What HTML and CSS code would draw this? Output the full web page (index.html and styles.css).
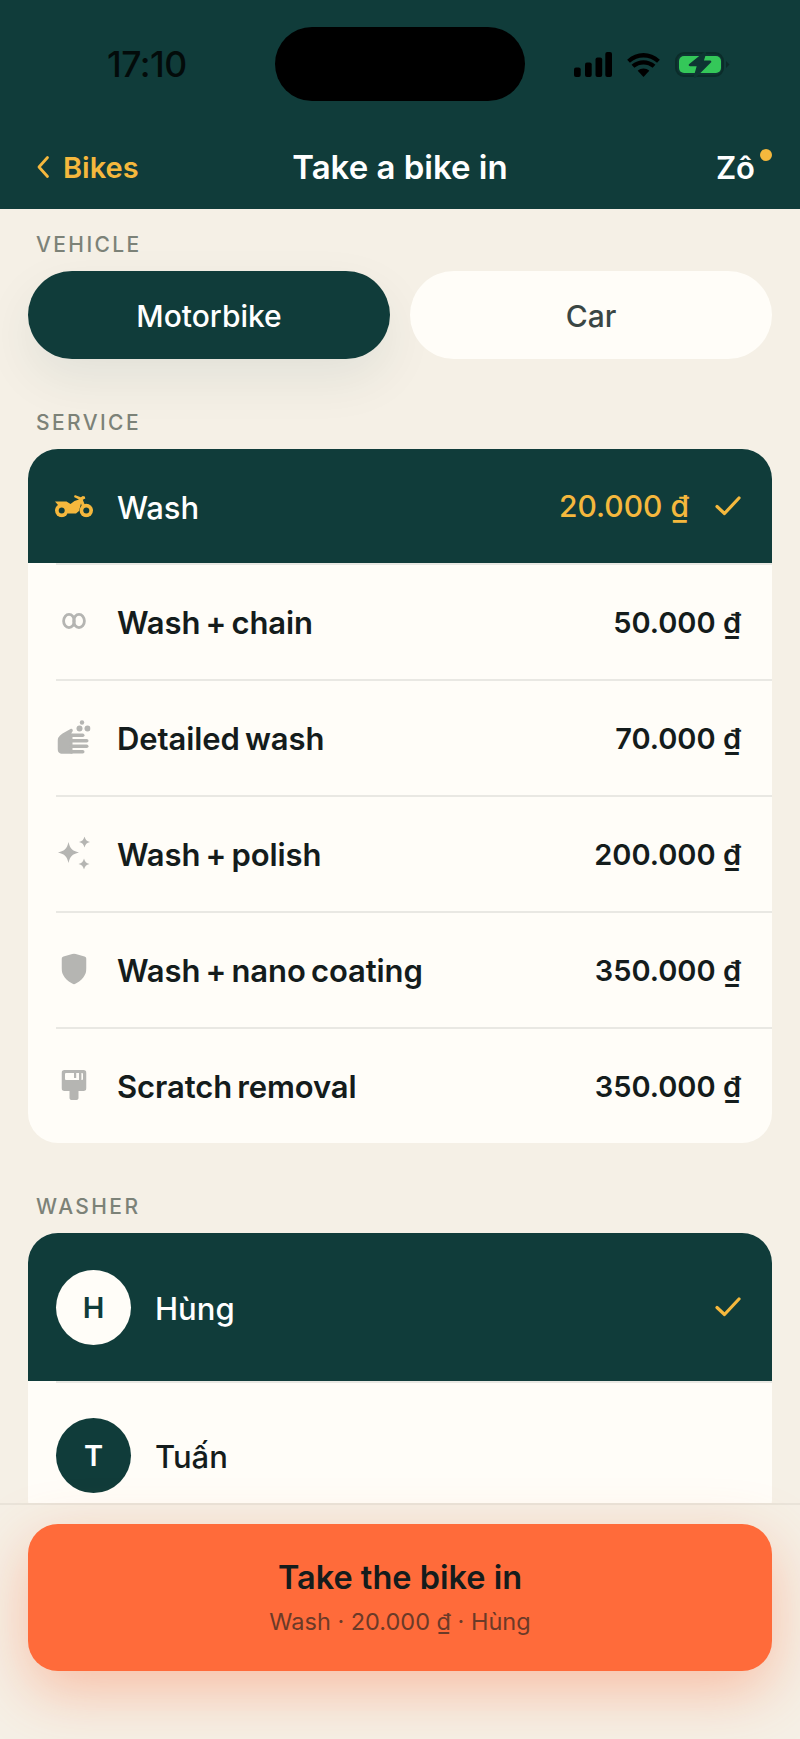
FILE: index.html
```html
<!DOCTYPE html>
<html lang="en">
<head>
<meta charset="utf-8">
<title>Take a bike in</title>
<link rel="stylesheet" href="styles.css">
</head>
<body>
<div class="phone">
  <header class="top">
    <div class="status">
      <span class="time">17:10</span>
      <div class="island"></div>
      <div class="sys">
        <svg class="signal" width="38" height="25" viewBox="0 0 38 25"><rect x="0" y="15.500" width="6.700" height="9.500" rx="2"/><rect x="11" y="10.500" width="6.700" height="14.500" rx="2"/><rect x="21.500" y="5.500" width="6.700" height="19.500" rx="2"/><rect x="31.300" y="0" width="6.700" height="25" rx="2"/></svg>
        <svg class="wifi" width="33" height="25" viewBox="0 0 34 26"><path d="M17 26l-6-6.500c3.400-3 8.600-3 12 0z"/><path d="M7.500 16.500L4.600 13.200c7-6.300 17.800-6.300 24.800 0l-2.900 3.300c-5.400-4.700-13.600-4.700-19 0z"/><path d="M2.900 11.300L0 8C9.700-1.300 24.300-1.300 34 8l-2.900 3.300C23 3.900 11 3.900 2.900 11.300z"/></svg>
        <svg class="battery" width="55" height="26" viewBox="0 0 55 26"><rect x="1" y="1" width="47" height="23" rx="8" fill="#0e3533" stroke="#0b2c2a" stroke-width="2"/><rect x="4" y="4" width="42" height="17" rx="5" fill="#34c759"/><path d="M51 9l3.500 3.500L51 16z" fill="#0b2b29"/><path d="M30 1L15 13h8.300L20 24.700 35 9.700h-7.700z" fill="#0e3533" stroke="#0e3533" stroke-width="2.500" stroke-linejoin="round"/></svg>
      </div>
    </div>
    <nav class="nav">
      <a class="back"><svg width="14" height="24" viewBox="0 0 14 24"><path d="M11.500 2.500L3 12l8.500 9.500" fill="none" stroke="#f5b83d" stroke-width="2.800" stroke-linecap="round" stroke-linejoin="round"/></svg><span>Bikes</span></a>
      <h1 class="title">Take a bike in</h1>
      <div class="user">Zô<i class="dot"></i></div>
    </nav>
  </header>

  <main class="content">
    <div class="label first">VEHICLE</div>
    <div class="pills">
      <div class="pill on">Motorbike</div>
      <div class="pill">Car</div>
    </div>

    <div class="label svc">SERVICE</div>
    <div class="card">
      <div class="row sel">
        <svg class="ico" width="38" height="23" viewBox="0 0 38 23"><g fill="#f5b83d"><path d="M0 7h11.500l4 2.500 4-3 4.500-1.500-5-2.500.8-2 6 2.300 2-1.300 2 .5.500 2-2.500 1.200L32 16l-3.500 1L26 9l-2 7.500-3 2.500h-8l-1-6-5-2.500H3z"/><circle cx="6.700" cy="16" r="6.700"/><circle cx="31.300" cy="16" r="6.700"/></g><circle cx="6.700" cy="16" r="3" fill="#103c3a"/><circle cx="31.300" cy="16" r="3" fill="#103c3a"/></svg>
        <span class="name">Wash</span><span class="price">20.000 ₫</span>
        <svg class="chk" width="26" height="20" viewBox="0 0 26 20"><path d="M2 10.500l7.500 7L24 2" fill="none" stroke="#f5b83d" stroke-width="3.200" stroke-linecap="round" stroke-linejoin="round"/></svg>
      </div>
      <div class="row">
        <svg class="ico" width="24" height="17" viewBox="0 0 24 17"><ellipse cx="7" cy="8.500" rx="5.400" ry="6.700" fill="none" stroke="#b5b5b2" stroke-width="2.800"/><ellipse cx="17" cy="8.500" rx="5.400" ry="6.700" fill="none" stroke="#b5b5b2" stroke-width="2.800"/></svg>
        <span class="name">Wash + chain</span><span class="price">50.000 ₫</span>
      </div>
      <div class="row">
        <svg class="ico" width="33" height="34" viewBox="0 0 33 34"><g fill="#b5b5b2"><circle cx="24.500" cy="2.500" r="2.200"/><circle cx="22" cy="8.500" r="3"/><circle cx="30" cy="8.500" r="3"/><path d="M0 21c0-3.500 2.500-5.500 5-7.500l8-4.500c1.600-.8 3 1 2 2.500l-1.500 2.200h1.500v20H5c-3 0-5-2-5-5z"/><rect x="12" y="13.500" width="15" height="3.600" rx="1.800"/><rect x="12" y="19" width="19" height="3.600" rx="1.800"/><rect x="12" y="24.500" width="19" height="3.600" rx="1.800"/><rect x="12" y="30" width="15" height="3.600" rx="1.800"/></g></svg>
        <span class="name">Detailed wash</span><span class="price">70.000 ₫</span>
      </div>
      <div class="row">
        <svg class="ico" width="32" height="33" viewBox="0 0 32 33"><g fill="#b5b5b2"><path d="M10.500 5.500c1.600 6.500 3.500 8.800 10.500 10.500-7 1.700-8.900 4-10.500 10.500C8.900 20 7 17.700 0 16c7-1.700 8.900-4 10.500-10.500z"/><path d="M26.500 0c.8 3.200 2.200 4.700 5.500 5.500-3.300.8-4.700 2.300-5.500 5.500-.8-3.200-2.200-4.700-5.500-5.500 3.300-.8 4.700-2.300 5.500-5.500z"/><path d="M26 22c.8 3.200 2.200 4.700 5.500 5.500-3.300.8-4.700 2.300-5.500 5.500-.8-3.200-2.200-4.700-5.500-5.500 3.300-.8 4.700-2.300 5.500-5.500z"/></g></svg>
        <span class="name">Wash + polish</span><span class="price">200.000 ₫</span>
      </div>
      <div class="row">
        <svg class="ico" width="25" height="31" viewBox="0 0 25 31"><path d="M12.500 0l10.500 3c1.300.4 2 1.300 2 2.500v9c0 7.500-5 12.800-12.500 16.500C5 27.300 0 22 0 14.500v-9C0 4.300.7 3.400 2 3z" fill="#b5b5b2"/></svg>
        <span class="name">Wash + nano coating</span><span class="price">350.000 ₫</span>
      </div>
      <div class="row">
        <svg class="ico" width="25" height="30" viewBox="0 0 25 30"><path d="M3 0h19c1.700 0 3 1.300 3 3v15c0 1.700-1.300 3-3 3h-5v7c0 1.100-.9 2-2 2h-5c-1.100 0-2-.9-2-2v-7H3c-1.700 0-3-1.300-3-3V3C0 1.300 1.300 0 3 0z" fill="#b5b5b2"/><rect x="3.500" y="3" width="18" height="7" rx="1" fill="#fffdf8"/><rect x="12.500" y="3" width="2.200" height="5" fill="#b5b5b2"/><rect x="17.500" y="3" width="2.400" height="7" fill="#b5b5b2"/></svg>
        <span class="name">Scratch removal</span><span class="price">350.000 ₫</span>
      </div>
    </div>

    <div class="label wsh">WASHER</div>
    <div class="card">
      <div class="wrow sel">
        <span class="avatar inv">H</span><span class="wname">Hùng</span>
        <svg class="chk" width="26" height="20" viewBox="0 0 26 20"><path d="M2 10.500l7.500 7L24 2" fill="none" stroke="#f5b83d" stroke-width="3.200" stroke-linecap="round" stroke-linejoin="round"/></svg>
      </div>
      <div class="wrow">
        <span class="avatar">T</span><span class="wname">Tuấn</span>
      </div>
    </div>
  </main>

  <footer class="foot">
    <button class="cta">
      <span class="cta-t">Take the bike in</span>
      <span class="cta-s">Wash · 20.000 ₫ · Hùng</span>
    </button>
  </footer>
</div>
</body>
</html>
```
FILE: styles.css
```css
* { box-sizing: border-box; }
html, body { margin: 0; padding: 0; }
body {
  width: 800px;
  height: 1739px;
  overflow: hidden;
  background: #f5f0e6;
  font-family: "Inter", "Noto Sans", sans-serif;
  color: #141c1c;
}
.phone { position: relative; width: 800px; height: 1739px; overflow: hidden; }

.top { background: #103c3a; height: 209px; }
.status {
  position: relative;
  height: 135px;
  display: flex;
  justify-content: space-between;
  align-items: flex-start;
}
.time {
  margin: 45px 0 0 107px;
  font-size: 35.5px;
  font-weight: 500;
  line-height: 40px;
  color: #030b0a;
  letter-spacing: -.5px;
}
.island {
  position: absolute;
  left: 275px;
  top: 27px;
  width: 250px;
  height: 74px;
  border-radius: 37px;
  background: #000;
}
.sys { display: flex; align-items: flex-start; gap: 15px; margin: 52px 70px 0 0; }
.signal, .wifi { fill: #000; display: block; }
.battery { display: block; }

.nav {
  display: flex;
  align-items: center;
  justify-content: space-between;
  height: 64px;
  padding: 0 36px;
  position: relative;
}
.back { display: flex; align-items: center; gap: 13px; color: #f5b83d; font-size: 29px; font-weight: 600; }
.title {
  position: absolute;
  left: 0;
  right: 0;
  margin: 0;
  text-align: center;
  color: #fff;
  font-size: 33px;
  font-weight: 600;
}
.user { position: relative; color: #fff; font-size: 31px; font-weight: 600; margin-right: 9px; }
.dot {
  position: absolute;
  right: -17px;
  top: 0;
  width: 12px;
  height: 12px;
  border-radius: 50%;
  background: #f5b83d;
}

.content { padding: 0 28px; }
.label {
  font-size: 21px;
  line-height: 26px;
  font-weight: 500;
  letter-spacing: 2.4px;
  color: #7c8278;
  padding-left: 8px;
}
.label.first { margin-top: 23px; margin-bottom: 13px; }
.label.svc { margin-top: 51px; margin-bottom: 13px; }
.label.wsh { margin-top: 51px; margin-bottom: 13px; }

.pills { display: flex; gap: 20px; }
.pill {
  flex: 1;
  height: 88px;
  padding-top: 2px;
  border-radius: 44px;
  background: #fffdf8;
  color: #3a4644;
  display: flex;
  align-items: center;
  justify-content: center;
  font-size: 30px;
  font-weight: 500;
}
.pill.on { background: #103c3a; color: #fff; box-shadow: 0 20px 50px rgba(16,60,58,.08); }

.card { background: #fffdf8; border-radius: 30px; overflow: hidden; }
.row {
  position: relative;
  height: 116px;
  display: flex;
  align-items: center;
  padding-right: 31px;
}
.row + .row::before, .wrow + .wrow::before {
  content: "";
  position: absolute;
  top: 0;
  left: 28px;
  right: 0;
  height: 2px;
  background: #e9e8e3;
}
.row .ico { position: absolute; left: 46px; top: 50%; transform: translate(-50%, -50%); }
.name {
  margin: 3px 0 0 89px;
  font-size: 31px;
  font-weight: 600;
  flex: 1;
  letter-spacing: -.1px;
  word-spacing: -2.500px;
}
.price { margin-top: 2px; font-size: 29px; font-weight: 600; }
.row.sel, .wrow.sel { background: #103c3a; color: #fff; }
.row.sel { height: 114px; }
.row.sel .price { margin-top: 0; color: #f5b83d; font-weight: 500; font-size: 30px; }
.row.sel .name { font-weight: 500; }
.chk { margin-left: 26px; flex: none; }

.wrow { position: relative; height: 149px; display: flex; align-items: center; padding: 0 31px 0 28px; }
.wrow.sel { height: 148px; }
.avatar {
  width: 75px;
  height: 75px;
  border-radius: 50%;
  background: #103c3a;
  color: #fff;
  display: flex;
  align-items: center;
  justify-content: center;
  font-size: 29px;
  font-weight: 600;
  flex: none;
}
.avatar.inv { background: #fffdf8; color: #103c3a; }
.wname { margin: 2px 0 0 24px; font-size: 31px; font-weight: 500; flex: 1; }

.foot {
  position: absolute;
  left: 0;
  right: 0;
  bottom: 0;
  height: 236px;
  background: #f5f0e6;
  border-top: 2px solid #e9e4da;
  padding: 19px 28px 0;
}
.cta {
  display: flex;
  flex-direction: column;
  align-items: center;
  justify-content: center;
  width: 100%;
  height: 147px;
  border: 0;
  border-radius: 30px;
  background: #ff6b3a;
  font-family: inherit;
  color: #141c1c;
  box-shadow: 0 20px 60px rgba(255,107,58,.38);
}
.cta-t { font-size: 32.500px; font-weight: 600; line-height: 40px; }
.cta-s { font-size: 23.500px; font-weight: 400; line-height: 32px; margin-top: 8px; color: #6b3a28; }
```
